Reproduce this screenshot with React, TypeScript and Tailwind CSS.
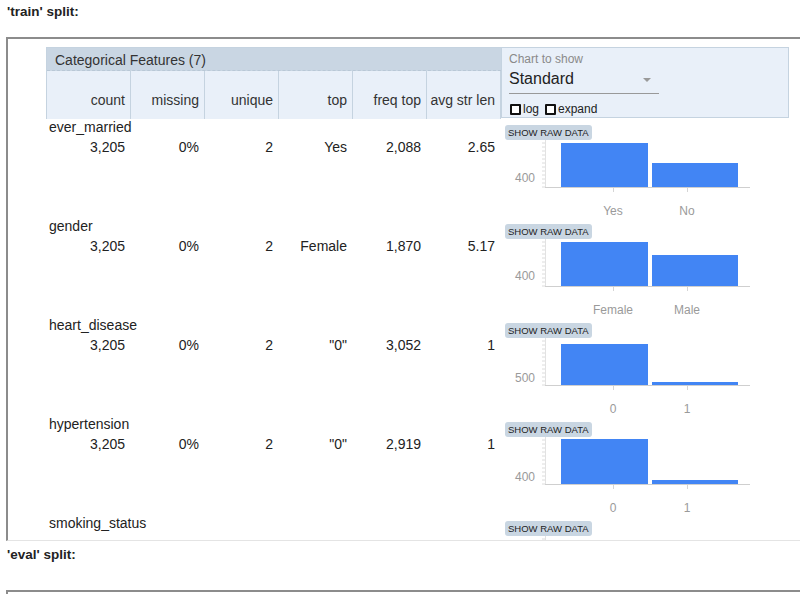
import React from "react";

type Feature = {
  name: string;
  values: string[];
  labels: [string, string];
  tops: [number, number];
  yLabel: string;
  yLabelY: number;
};

const features: Feature[] = [
  { name: "ever_married", values: ["3,205", "0%", "2", "Yes", "2,088", "2.65"], labels: ["Yes", "No"], tops: [3, 23], yLabel: "400", yLabelY: 38 },
  { name: "gender", values: ["3,205", "0%", "2", "Female", "1,870", "5.17"], labels: ["Female", "Male"], tops: [3, 16], yLabel: "400", yLabelY: 37 },
  { name: "heart_disease", values: ["3,205", "0%", "2", "\"0\"", "3,052", "1"], labels: ["0", "1"], tops: [6, 44], yLabel: "500", yLabelY: 40 },
  { name: "hypertension", values: ["3,205", "0%", "2", "\"0\"", "2,919", "1"], labels: ["0", "1"], tops: [2, 43], yLabel: "400", yLabelY: 40 },
  { name: "smoking_status", values: [], labels: ["", ""], tops: [47, 47], yLabel: "", yLabelY: 0 },
];

const columns = ["count", "missing", "unique", "top", "freq top", "avg str len"];
const colWidths = ["w-[84px]", "w-[74px]", "w-[74px]", "w-[74px]", "w-[74px]", "w-[74px]"];

function Chart({ f }: { f: Feature }) {
  const axis = 47;
  return (
    <svg width={250} height={78} className="block">
      {Array.from({ length: 12 }).map((_, i) => (
        <line key={i} x1={37} x2={40} y1={axis - i * 4} y2={axis - i * 4} stroke="#dcdcdc" />
      ))}
      <line x1={40.5} y1={0} x2={40.5} y2={axis} stroke="#e2e2e2" />
      <rect x={56} y={f.tops[0]} width={87} height={axis - f.tops[0]} fill="#4285f4" />
      <rect x={147} y={f.tops[1]} width={86} height={axis - f.tops[1]} fill="#4285f4" />
      <line x1={40} x2={245} y1={axis + 0.5} y2={axis + 0.5} stroke="#cfcfcf" />
      <line x1={108.5} x2={108.5} y1={axis + 1} y2={axis + 5} stroke="#d5d5d5" />
      <line x1={182.5} x2={182.5} y1={axis + 1} y2={axis + 5} stroke="#d5d5d5" />
      <text x={30} y={f.yLabelY + 4} textAnchor="end" fontSize={12} fill="#9a9a9a" fontFamily="Liberation Sans, Arial, sans-serif">
        {f.yLabel}
      </text>
      <text x={108} y={75} textAnchor="middle" fontSize={12} fill="#9a9a9a" fontFamily="Liberation Sans, Arial, sans-serif">
        {f.labels[0]}
      </text>
      <text x={182} y={75} textAnchor="middle" fontSize={12} fill="#9a9a9a" fontFamily="Liberation Sans, Arial, sans-serif">
        {f.labels[1]}
      </text>
    </svg>
  );
}

function Row({ f }: { f: Feature }) {
  return (
    <div className="flex h-[99px] shrink-0">
      <div className="w-[454px] shrink-0">
        <div className="pl-[3px] text-[14px] leading-[16px] text-[#222]">{f.name}</div>
        <div className="flex mt-[4px] text-[14px] leading-[16px] text-[#222]">
          {f.values.map((v, i) => (
            <div key={i} className={`${colWidths[i]} text-right pr-[5px]`}>
              {v}
            </div>
          ))}
        </div>
      </div>
      <div className="pl-[5px] pt-[6px]">
        <button className="block h-[15px] px-[3px] rounded-[3px] bg-[#c9d6e2] text-[9.5px] leading-[15px] text-[#222] uppercase">
          Show raw data
        </button>
        <Chart f={f} />
      </div>
    </div>
  );
}

function Checkbox({ label }: { label: string }) {
  return (
    <span className="flex items-center gap-[2px]">
      <span className="w-[11px] h-[11px] border-2 border-[#111] rounded-[1px] bg-white" />
      <span className="text-[12px] leading-[14px] text-[#222]">{label}</span>
    </span>
  );
}

export default function App() {
  return (
    <div className="w-[800px] h-[594px] overflow-hidden bg-white font-['Liberation_Sans',Arial,sans-serif]">
      <div className="h-[37px] pl-[7px] pt-[4px] text-[13.5px] leading-[16px] font-bold text-[#222]">'train' split:</div>
      <div className="ml-[6px] h-[504px] border-t-2 border-l-2 border-[#8c8c8c] border-b border-b-[#e4e4e4] overflow-hidden">
        <div className="pl-[38px] pt-[8px] flex flex-col">
          <div className="flex shrink-0">
            <div className="w-[455px] border-l border-t border-[#c5d3e0]">
              <div className="h-[23px] bg-[#c9d6e3] pl-[8px] text-[14px] leading-[24px] text-[#333] border-b border-dashed border-[#b9c8d6]">
                Categorical Features (7)
              </div>
              <div className="flex h-[48px] bg-[#e9f0f9]">
                {columns.map((c, i) => (
                  <div
                    key={c}
                    className={`${colWidths[i]} border-r border-[#c5d3e0] flex items-end justify-end pr-[5px] pb-[11px] text-[14px] leading-[16px] text-[#333]`}
                  >
                    {c}
                  </div>
                ))}
              </div>
            </div>
            <div className="w-[288px] h-[71px] border border-[#c5d3e0] bg-[#e9f0f9] pl-[7px] pt-[4px]">
              <div className="text-[12px] leading-[14px] text-[#8a8a8a]">Chart to show</div>
              <div className="mt-[3px] w-[150px] h-[25px] border-b border-[#999] flex justify-between pr-[8px]">
                <span className="text-[16px] leading-[20px] text-[#222]">Standard</span>
                <svg width="8" height="5" className="mt-[9px]">
                  <polygon points="0,0 8,0 4,4" fill="#9a9a9a" />
                </svg>
              </div>
              <div className="mt-[8px] flex gap-[6px] pl-[1px]">
                <Checkbox label="log" />
                <Checkbox label="expand" />
              </div>
            </div>
          </div>
          {features.map((f) => (
            <Row key={f.name} f={f} />
          ))}
        </div>
      </div>
      <div className="h-[49px] pl-[7px] pt-[6px] text-[13.5px] leading-[16px] font-bold text-[#222]">'eval' split:</div>
      <div className="ml-[6px] h-[20px] border-t-2 border-l-2 border-[#8c8c8c]" />
    </div>
  );
}
